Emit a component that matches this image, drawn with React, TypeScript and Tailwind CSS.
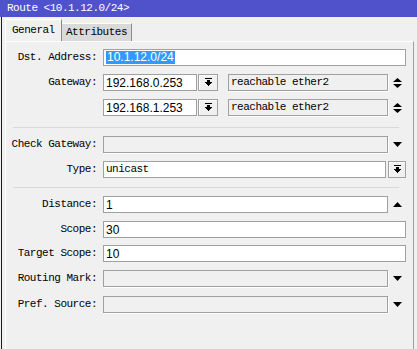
import type { ReactNode } from 'react';

const mono = "font-['Liberation_Mono',monospace] text-[11px] tracking-[-0.5px]";
const sans = "font-['Liberation_Sans',Arial,sans-serif] text-[12px]";

function DownBar() {
  return (
    <svg width="9" height="9" viewBox="0 0 9 9" shapeRendering="crispEdges">
      <rect x="1" y="0" width="7" height="1" fill="#000" />
      <rect x="3" y="2" width="3" height="2" fill="#000" />
      <path d="M1 4h7l-3.5 4z" fill="#000" />
    </svg>
  );
}

function UpDown() {
  return (
    <svg width="9" height="10" viewBox="0 0 9 10">
      <path d="M0 4h9L4.5 0z M0 6h9L4.5 10z" fill="#000" />
    </svg>
  );
}

function Down() {
  return (
    <svg width="9" height="5" viewBox="0 0 9 5">
      <path d="M0 0h9L4.5 5z" fill="#000" />
    </svg>
  );
}

function Up() {
  return (
    <svg width="9" height="5" viewBox="0 0 9 5">
      <path d="M0 5h9L4.5 0z" fill="#000" />
    </svg>
  );
}

function Row({ label, children, className = '' }: { label?: string; children: ReactNode; className?: string }) {
  return (
    <div className={`flex h-[17px] items-center ${className}`}>
      <div className={`w-[91px] shrink-0 text-right ${mono}`}>{label}</div>
      <div className="ml-[6px] flex h-full flex-1 items-stretch">{children}</div>
    </div>
  );
}

function Field({ children, gray = false, className = 'flex-1' }: { children?: ReactNode; gray?: boolean; className?: string }) {
  return (
    <div
      className={`flex h-full items-center border border-[#a0a0a0] px-[2px] ${
        gray ? 'bg-[#f0f0f0] shadow-[1px_1px_0_#ffffff]' : 'bg-white'
      } ${className}`}
    >
      {children}
    </div>
  );
}

function Slot({ children }: { children: ReactNode }) {
  return <div className="flex w-[18px] shrink-0 items-center justify-center">{children}</div>;
}

function Button({ className = 'w-[18px] ml-[2px]' }: { className?: string }) {
  return (
    <div className={`flex shrink-0 items-center justify-center border border-[#a0a0a0] bg-[#f0f0f0] shadow-[inset_1px_1px_0_#ffffff] ${className}`}>
      <DownBar />
    </div>
  );
}

function Separator({ className }: { className: string }) {
  return <div className={`mx-[7px] h-px bg-[#d9d9d9] ${className}`} />;
}

export default function App() {
  return (
    <div className="flex h-[349px] w-[417px] flex-col overflow-hidden bg-[#f0f0f0] text-black">
      <div className={`flex h-[17px] shrink-0 items-center bg-[#5052cc] pl-[7px] text-white ${mono}`}>
        Route &lt;10.1.12.0/24&gt;
      </div>

      <div className="flex flex-1">
        <div className="ml-px w-px bg-[#1e1e1e]" />
        <div className="flex flex-1 flex-col px-[3px] pt-[2px]">
          {/* Tabs */}
          <div className="flex h-[22px] items-end">
            <div className={`flex h-[22px] w-[57px] items-center border-l border-t border-r border-l-white border-t-white border-r-[#8a8a8a] bg-[#f0f0f0] pl-[6px] ${mono}`}>
              General
            </div>
            <div className={`flex h-[18px] w-[70px] items-center border-t border-r border-t-white border-r-[#8a8a8a] bg-[#dadada] pl-[4px] ${mono}`}>
              Attributes
            </div>
          </div>

          {/* Panel */}
          <div className="flex flex-1 flex-col border-l border-t border-r border-l-white border-t-white border-r-[#a0a0a0] pr-[7px] pt-[7px]">
            <Row label="Dst. Address:">
              <Field>
                <span className={`bg-[#3399ff] px-px leading-[13px] text-white ${sans}`}>10.1.12.0/24</span>
              </Field>
            </Row>

            <Row label="Gateway:" className="mt-[8px]">
              <Field className="w-[94px]">
                <span className={sans}>192.168.0.253</span>
              </Field>
              <Button className="ml-px w-[20px]" />
              <div className="ml-[10px] flex flex-1">
                <Field gray>
                  <span className={mono}>reachable ether2</span>
                </Field>
              </div>
              <Slot>
                <UpDown />
              </Slot>
            </Row>

            <Row className="mt-[8px]">
              <Field className="w-[94px]">
                <span className={sans}>192.168.1.253</span>
              </Field>
              <Button className="ml-px w-[20px]" />
              <div className="ml-[10px] flex flex-1">
                <Field gray>
                  <span className={mono}>reachable ether2</span>
                </Field>
              </div>
              <Slot>
                <UpDown />
              </Slot>
            </Row>

            <Separator className="mt-[11px]" />

            <Row label="Check Gateway:" className="mt-[8px]">
              <Field gray />
              <Slot>
                <Down />
              </Slot>
            </Row>

            <Row label="Type:" className="mt-[8px]">
              <Field>
                <span className={mono}>unicast</span>
              </Field>
              <Button />
            </Row>

            <Separator className="mt-[9px]" />

            <Row label="Distance:" className="mt-[8px]">
              <Field>
                <span className={sans}>1</span>
              </Field>
              <Slot>
                <Up />
              </Slot>
            </Row>

            <Row label="Scope:" className="mt-[8px]">
              <Field>
                <span className={sans}>30</span>
              </Field>
            </Row>

            <Row label="Target Scope:" className="mt-[7px]">
              <Field>
                <span className={sans}>10</span>
              </Field>
            </Row>

            <Row label="Routing Mark:" className="mt-[8px]">
              <Field gray />
              <Slot>
                <Down />
              </Slot>
            </Row>

            <Row label="Pref. Source:" className="mt-[9px]">
              <Field gray />
              <Slot>
                <Down />
              </Slot>
            </Row>
          </div>
        </div>
      </div>
    </div>
  );
}
